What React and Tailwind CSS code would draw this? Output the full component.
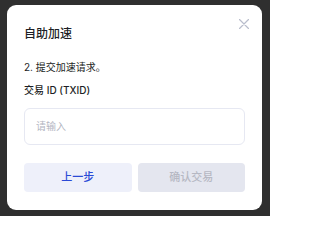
import React from 'react';

function CloseIcon() {
  return (
    <svg width="10" height="10" viewBox="0 0 10 10" fill="none">
      <path d="M0.5 0.5L9.5 9.5M9.5 0.5L0.5 9.5" stroke="#b9bdcc" strokeWidth="1.2" strokeLinecap="round" />
    </svg>
  );
}

export default function App() {
  return (
    <div
      className="w-[270px] h-[216px] bg-[#2f2f2f] overflow-hidden pt-[5px] pl-[7px]"
      style={{ fontFamily: 'Inter, "Noto Sans CJK SC", sans-serif' }}
    >
      <div className="relative w-[255px] h-[205px] bg-white rounded-[9px] px-[17px] pt-[21px] flex flex-col">
        <button className="absolute top-[14px] right-[13px]">
          <CloseIcon />
        </button>
        <h2 className="text-[12px] leading-[16px] font-medium text-[#1d1f26]">自助加速</h2>
        <p className="mt-[18px] text-[10px] leading-[14px] text-[#1d1f26]">2. 提交加速请求。</p>
        <p className="mt-[9px] text-[10px] leading-[14px] font-medium text-[#1d1f26]">交易 ID (TXID)</p>
        <div className="mt-[11px] h-[37px] border border-[#e6e8f2] rounded-[6px] flex items-center px-[11px]">
          <input
            className="w-full outline-none text-[10px] text-[#1d1f26] placeholder:text-[#b3b6c2] bg-transparent"
            placeholder="请输入"
          />
        </div>
        <div className="mt-[18px] flex gap-[6px]">
          <button className="flex-1 h-[29px] rounded-[4px] bg-[#eef0fa] text-[11px] font-medium text-[#2b4ad6]">
            上一步
          </button>
          <button className="flex-1 h-[29px] rounded-[4px] bg-[#e4e6ef] text-[11px] font-medium text-[#b6b8c3]">
            确认交易
          </button>
        </div>
      </div>
    </div>
  );
}
